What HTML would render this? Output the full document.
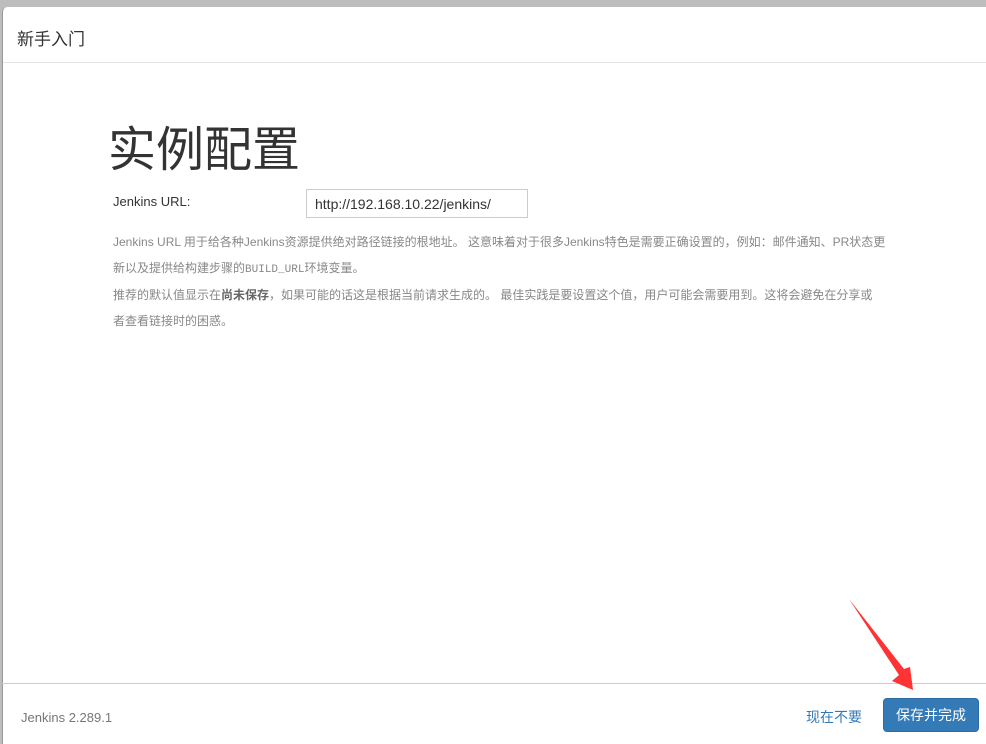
<!DOCTYPE html>
<html><head><meta charset="utf-8"><style>
*{margin:0;padding:0;box-sizing:border-box}
html,body{width:986px;height:744px;overflow:hidden;background:#bdbdbd}
body{font-family:"Liberation Sans","Noto Sans CJK SC",sans-serif;position:relative}
.modal{position:absolute;left:2px;top:7px;width:990px;height:745px;background:#fff;border-radius:5px 0 0 0;border-left:1px solid #999}
.hd{position:absolute;left:0;top:0;right:0;height:56px;border-bottom:1px solid #e5e5e5}
.hd span{position:absolute;left:14px;top:18px;font-size:17px;color:#333}
h1{position:absolute;left:108px;top:127px;font-size:48px;font-weight:400;color:#333;line-height:1}
.lbl{position:absolute;left:113px;top:194px;font-size:13px;color:#333}
.inp{position:absolute;left:306px;top:189px;width:222px;height:29px;border:1px solid #ccc;font-size:14px;color:#333;padding:6px 8px}
.help{position:absolute;left:113px;top:230px;width:820px;white-space:nowrap;font-size:12px;color:#888;line-height:25.5px}
.help b{color:#666}
.help code{font-family:"Liberation Mono",monospace;font-size:11px}
.ft{position:absolute;left:2px;top:683px;width:990px;border-top:1px solid #ccc;height:70px}
.ver{position:absolute;left:21px;top:710px;font-size:13px;color:#777}
.later{position:absolute;left:806px;top:707px;font-size:14px;color:#337ab7}
.btn{position:absolute;left:883px;top:698px;width:96px;height:34px;background:#337ab7;border:1px solid #2e6da4;border-radius:4px;color:#fff;font-size:14px;text-align:center;line-height:32px}
svg{position:absolute;left:0;top:0}
</style></head><body>
<div class="modal"><div class="hd"><span>新手入门</span></div></div>
<h1>实例配置</h1>
<div class="lbl">Jenkins URL:</div>
<div class="inp">http://192.168.10.22/jenkins/</div>
<div class="help">Jenkins URL 用于给各种Jenkins资源提供绝对路径链接的根地址。 这意味着对于很多Jenkins特色是需要正确设置的，例如：邮件通知、PR状态更<br>新以及提供给构建步骤的<code>BUILD_URL</code>环境变量。<br>推荐的默认值显示在<b>尚未保存</b>，如果可能的话这是根据当前请求生成的。 最佳实践是要设置这个值，用户可能会需要用到。这将会避免在分享或<br>者查看链接时的困惑。</div>
<div class="ft"></div>
<div class="ver">Jenkins 2.289.1</div>
<div class="later">现在不要</div>
<div class="btn">保存并完成</div>
<svg width="986" height="744"><polygon points="849,599 904,669 910,667 913,690 892,681 899,675" fill="#f33"/></svg>
</body></html>
